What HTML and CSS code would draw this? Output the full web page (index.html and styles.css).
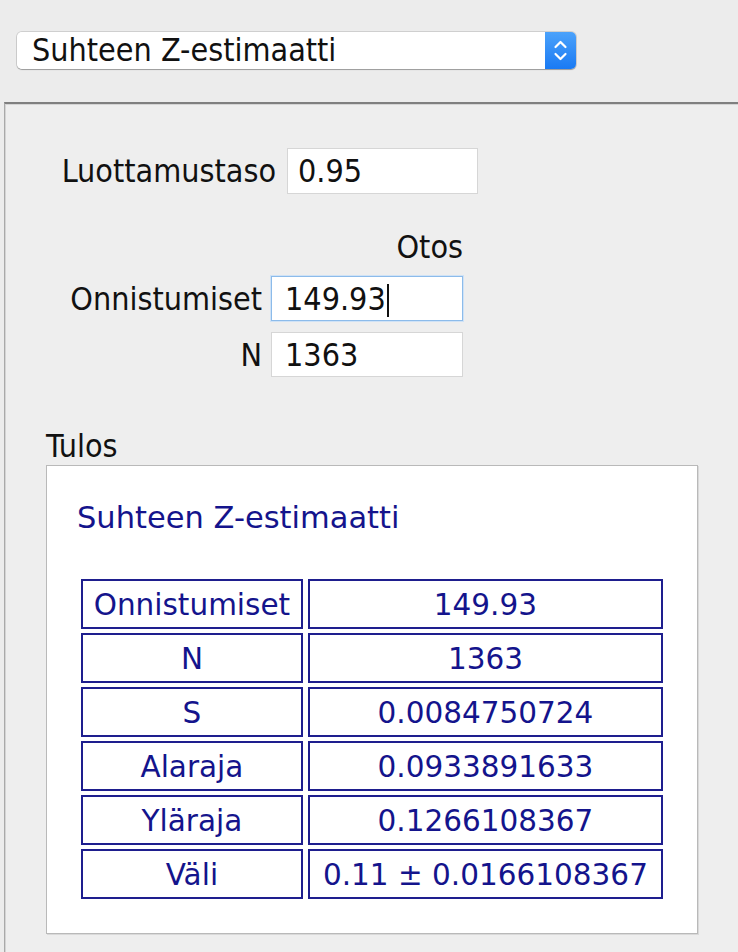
FILE: index.html
```html
<!DOCTYPE html>
<html>
<head>
    <meta http-equiv="Content-Type" content="text/html; charset=UTF-8">
    <link rel="stylesheet" href="styles.css">
</head>
<body>
    <div class="top-bar">
        <div class="select">
            <div class="select-text">Suhteen Z-estimaatti</div>
            <div class="stepper">
                <svg width="31" height="37" viewBox="0 0 31 37">
                    <path d="M10.5 15 L15.5 10 L20.5 15" fill="none" stroke="#fff" stroke-width="2.2" stroke-linecap="round" stroke-linejoin="round"/>
                    <path d="M10.5 22 L15.5 27 L20.5 22" fill="none" stroke="#fff" stroke-width="2.2" stroke-linecap="round" stroke-linejoin="round"/>
                </svg>
            </div>
        </div>
    </div>

    <div class="panel">
        <div class="level-row">
            <label class="label level-label">Luottamustaso</label>
            <div class="field level-field">0.95</div>
        </div>

        <div class="sample-grid">
            <div></div>
            <div class="label sample-head">Otos</div>

            <label class="label">Onnistumiset</label>
            <div class="field focused">149.93<span class="caret"></span></div>

            <label class="label">N</label>
            <div class="field">1363</div>
        </div>

        <div class="label result-title">Tulos</div>
        <div class="result-box">
            <h2 class="result-heading">Suhteen Z-estimaatti</h2>
            <table class="result-table">
                <colgroup>
                    <col class="col-name">
                    <col class="col-value">
                </colgroup>
                <tr><td>Onnistumiset</td><td>149.93</td></tr>
                <tr><td>N</td><td>1363</td></tr>
                <tr><td>S</td><td>0.0084750724</td></tr>
                <tr><td>Alaraja</td><td>0.0933891633</td></tr>
                <tr><td>Yläraja</td><td>0.1266108367</td></tr>
                <tr><td>Väli</td><td>0.11 ± 0.0166108367</td></tr>
            </table>
        </div>
    </div>
</body>
</html>
```

FILE: styles.css
```css
html, body {
    margin: 0;
    padding: 0;
}

body {
    width: 738px;
    height: 952px;
    overflow: hidden;
    background-color: #ececec;
    font-family: "DejaVu Sans Condensed", "DejaVu Sans", sans-serif;
    font-stretch: condensed;
    font-size: 32px;
    color: #111;
}

.top-bar {
    height: 102px;
    box-sizing: border-box;
    padding: 32px 0 0 17px;
}

.select {
    display: flex;
    width: 559px;
    height: 37px;
    border-radius: 5px;
    box-shadow: 0 1px 1px rgba(0, 0, 0, 0.25), 0 0 0 1px #cfcfcf;
}

.select-text {
    flex: 1;
    background-color: #fff;
    border-radius: 5px 0 0 5px;
    padding-left: 15px;
    line-height: 37px;
}

.stepper {
    width: 31px;
    height: 37px;
    border-radius: 0 5px 5px 0;
    background: linear-gradient(#4ba2fb, #1a7af3);
}

.stepper svg {
    display: block;
}

.panel {
    height: 850px;
    margin-left: 4px;
    border-top: 2px solid #7f7f7f;
    border-left: 1px solid #a9a9a9;
    box-shadow: inset 1px 1px 0 #d4d4d4;
    background-color: #eeeeee;
}

.label {
    display: block;
    line-height: 36px;
    text-align: right;
}

.level-row {
    display: flex;
    align-items: center;
    gap: 11px;
    margin-top: 44px;
}

.level-label {
    width: 271px;
}

.field {
    box-sizing: border-box;
    height: 46px;
    line-height: 44px;
    padding-left: 10px;
    background-color: #fff;
    border: 1px solid #d6d6d6;
}

.level-field {
    width: 191px;
}

.sample-grid {
    display: grid;
    grid-template-columns: 257px 192px;
    column-gap: 9px;
    row-gap: 11px;
    align-items: center;
    margin-top: 35px;
}

.sample-grid .field {
    height: 45px;
    padding-left: 13px;
}

.field.focused {
    border: 1px solid #8cbbea;
    box-shadow: 0 0 0 1px #cfe2f6;
}

.caret {
    display: inline-block;
    width: 2px;
    height: 33px;
    margin-left: 1px;
    vertical-align: -7px;
    background-color: #111;
}

.result-title {
    text-align: left;
    margin: 51px 0 1px 41px;
}

.result-box {
    box-sizing: border-box;
    width: 652px;
    height: 469px;
    margin-left: 41px;
    padding: 0 29px;
    background-color: #fff;
    border: 1px solid #b9b9b9;
    box-shadow: 1px 1px 0 #d9d9d9;
    font-family: "DejaVu Sans", sans-serif;
    font-stretch: normal;
    color: #14148c;
}

.result-heading {
    margin: 34px 0 0 1px;
    font-size: 30.5px;
    font-weight: normal;
    line-height: 35px;
}

.result-table {
    margin-top: 40px;
    border-collapse: separate;
    border-spacing: 5px 4px;
    table-layout: fixed;
    font-size: 29.5px;
}

.col-name {
    width: 222px;
}

.col-value {
    width: 356px;
}

.result-table td {
    box-sizing: border-box;
    height: 50px;
    padding: 3px 0 0 0;
    border: 2px solid #1e1e8e;
    text-align: center;
    vertical-align: middle;
    line-height: 35px;
}
```
